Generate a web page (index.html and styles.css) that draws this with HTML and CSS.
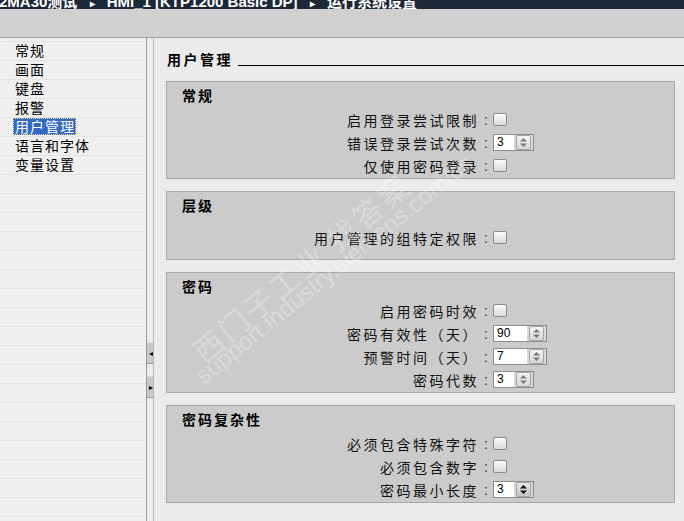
FILE: index.html
```html
<!DOCTYPE html>
<html lang="zh-CN">
<head>
  <meta charset="UTF-8" />
  <title>运行系统设置</title>
  <link rel="stylesheet" href="styles.css">
</head>
<body>

  <!-- 标题栏 -->
  <div class="titlebar">
    <span class="crumbs">2MA30测试 <span class="sep">▸</span> HMI_1 [KTP1200 Basic DP] <span class="sep">▸</span> 运行系统设置</span>
  </div>
  <div class="toolbar"></div>

  <div class="main">
    <!-- 左侧导航 -->
    <ul class="nav">
      <li>常规</li>
      <li>画面</li>
      <li>键盘</li>
      <li>报警</li>
      <li class="selected"><span>用户管理</span></li>
      <li>语言和字体</li>
      <li>变量设置</li>
    </ul>

    <div class="splitter">
      <span class="split-btn">&#9666;</span>
      <span class="split-btn">&#9656;</span>
    </div>

    <!-- 内容 -->
    <div class="content">
      <h2 class="page-title"><span>用户管理</span><i class="rule"></i></h2>

      <section class="group">
        <h3>常规</h3>
        <div class="field"><label>启用登录尝试限制</label><span class="colon">:</span><span class="check"></span></div>
        <div class="field"><label>错误登录尝试次数</label><span class="colon">:</span>
          <span class="spin"><span class="spin-val">3</span><span class="spin-btn"><svg width="9" height="11" viewBox="0 0 9 11"><path d="M4.5 1 L8 4.5 L1 4.5 Z M1 6.5 L8 6.5 L4.5 10 Z" fill="#7a7a7a"/></svg></span></span>
        </div>
        <div class="field"><label>仅使用密码登录</label><span class="colon">:</span><span class="check"></span></div>
      </section>

      <section class="group group-loose">
        <h3>层级</h3>
        <div class="field"><label>用户管理的组特定权限</label><span class="colon">:</span><span class="check"></span></div>
      </section>

      <section class="group">
        <h3>密码</h3>
        <div class="field"><label>启用密码时效</label><span class="colon">:</span><span class="check"></span></div>
        <div class="field"><label>密码有效性（天）</label><span class="colon">:</span>
          <span class="spin spin-wide"><span class="spin-val">90</span><span class="spin-btn"><svg width="9" height="11" viewBox="0 0 9 11"><path d="M4.5 1 L8 4.5 L1 4.5 Z M1 6.5 L8 6.5 L4.5 10 Z" fill="#7a7a7a"/></svg></span></span>
        </div>
        <div class="field"><label>预警时间（天）</label><span class="colon">:</span>
          <span class="spin spin-wide"><span class="spin-val">7</span><span class="spin-btn"><svg width="9" height="11" viewBox="0 0 9 11"><path d="M4.5 1 L8 4.5 L1 4.5 Z M1 6.5 L8 6.5 L4.5 10 Z" fill="#7a7a7a"/></svg></span></span>
        </div>
        <div class="field"><label>密码代数</label><span class="colon">:</span>
          <span class="spin"><span class="spin-val">3</span><span class="spin-btn"><svg width="9" height="11" viewBox="0 0 9 11"><path d="M4.5 1 L8 4.5 L1 4.5 Z M1 6.5 L8 6.5 L4.5 10 Z" fill="#7a7a7a"/></svg></span></span>
        </div>
      </section>

      <section class="group">
        <h3>密码复杂性</h3>
        <div class="field"><label>必须包含特殊字符</label><span class="colon">:</span><span class="check"></span></div>
        <div class="field"><label>必须包含数字</label><span class="colon">:</span><span class="check"></span></div>
        <div class="field"><label>密码最小长度</label><span class="colon">:</span>
          <span class="spin spin-focus"><span class="spin-val">3</span><span class="spin-btn"><svg width="9" height="11" viewBox="0 0 9 11"><path d="M4.5 1 L8 4.5 L1 4.5 Z M1 6.5 L8 6.5 L4.5 10 Z" fill="#111"/></svg></span></span>
        </div>
      </section>

      <!-- 水印 -->
      <div class="watermark wm-cn">西门子工业 找答案</div>
      <div class="watermark wm-url">support.industry.siemens.com/cs</div>
    </div>
  </div>

</body>
</html>
```

FILE: styles.css
```css
* {
  box-sizing: border-box;
  margin: 0;
  padding: 0;
}

html, body {
  width: 684px;
  height: 521px;
  overflow: hidden;
}

body {
  font-family: "Noto Sans CJK SC", "Liberation Sans", sans-serif;
  font-size: 14px;
  color: #000;
  background: #ebebeb;
}

/* --- TITLE BAR --- */
.titlebar {
  height: 9px;
  background: #1d2838;
  overflow: hidden;
  white-space: nowrap;
}

.crumbs {
  display: block;
  margin: -6px 0 0 -1px;
  font-family: "Liberation Sans", "Noto Sans CJK SC", sans-serif;
  font-size: 15px;
  line-height: 16px;
  font-weight: bold;
  color: #fff;
}

.crumbs .sep {
  font-size: 10px;
  margin: 0 8px;
}

.toolbar {
  height: 29px;
  background: #d0d0d0;
  border-bottom: 1px solid #a4a4a4;
}

/* --- LAYOUT --- */
.main {
  display: flex;
  height: 483px;
}

.nav {
  list-style: none;
  width: 146px;
  padding-top: 3px;
  background-color: #f0f0f0;
  background-image: repeating-linear-gradient(to bottom, #e4e4e4 0, #e4e4e4 1px, transparent 1px, transparent 19px);
  background-position: 0 3px;
}

.nav li {
  height: 19px;
  line-height: 19px;
  padding-left: 15px;
  letter-spacing: 1px;
  white-space: nowrap;
}

.nav li.selected span {
  display: inline-block;
  height: 17px;
  line-height: 16px;
  margin-left: -2px;
  padding: 0 1px 0 2px;
  background: #3268c4;
  color: #fff;
  outline: 1px dotted #e8d88a;
  outline-offset: -1px;
}

.splitter {
  width: 8px;
  background: #ececec;
  border-left: 1px solid #9a9a9a;
  border-right: 1px solid #b8b8b8;
  display: flex;
  flex-direction: column;
  padding-top: 304px;
  gap: 12px;
}

.split-btn {
  height: 22px;
  background: #c9c9c9;
  border-top: 1px solid #dedede;
  border-bottom: 1px solid #9c9c9c;
  font-size: 8px;
  line-height: 20px;
  text-align: right;
  color: #000;
  overflow: hidden;
}

/* --- CONTENT --- */
.content {
  position: relative;
  flex: 1;
  background: #ebebeb;
  padding: 12px 9px 0 12px;
  overflow: hidden;
}

.page-title {
  display: flex;
  align-items: flex-end;
  height: 18px;
  margin: 0 -9px 13px 1px;
  font-size: 14px;
  font-weight: bold;
  line-height: 18px;
  letter-spacing: 2.5px;
}

.page-title .rule {
  flex: 1;
  margin: 0 0 2px 5px;
  border-bottom: 1px solid #000;
}

.group {
  background: #cbcbcb;
  border: 1px solid #a8a8a8;
  padding: 4px 0 1px;
  margin-bottom: 12px;
}

.group h3 {
  height: 18px;
  line-height: 18px;
  padding-left: 15px;
  margin-bottom: 4px;
  font-size: 14px;
  font-weight: bold;
  letter-spacing: 2px;
}

.group-loose {
  padding-bottom: 10px;
}

.group-loose h3 {
  margin-bottom: 12px;
}

.field {
  display: grid;
  grid-template-columns: 312px 14px auto;
  align-items: center;
  height: 23px;
}

.field label {
  text-align: right;
  letter-spacing: 2.5px;
  white-space: nowrap;
  color: #111;
}

.colon {
  text-align: center;
  font-family: "Liberation Sans", sans-serif;
  color: #333;
}

.check {
  width: 14px;
  height: 13px;
  border: 1px solid #8a8a8a;
  border-radius: 2px;
  background: linear-gradient(#fdfdfd, #d9d9d9);
}

/* spin box */
.spin {
  display: inline-flex;
  width: 41px;
  height: 17px;
  border: 1px solid #8c8c8c;
  background: #d8d8d8;
}

.spin-wide {
  width: 54px;
}

.spin-val {
  flex: 1;
  background: #fff;
  font-family: "Liberation Sans", sans-serif;
  font-size: 12px;
  line-height: 15px;
  padding-left: 3px;
  margin-right: 2px;
}

.spin-btn {
  width: 15px;
  margin: 0 2px 0 0;
  border: 1px solid #a5a5a5;
  border-radius: 2px;
  background: linear-gradient(#f4f4f4, #d6d6d6);
  display: flex;
  align-items: center;
  justify-content: center;
}

.spin-focus .spin-btn {
  background: linear-gradient(#e8e8e8, #c4c4c4);
}

/* --- WATERMARK --- */
.watermark {
  position: absolute;
  white-space: nowrap;
  color: rgba(255, 255, 255, 0.3);
  transform-origin: left top;
  pointer-events: none;
}

.wm-cn {
  left: 28px;
  top: 300px;
  font-size: 30px;
  letter-spacing: 3px;
  transform: rotate(-40deg);
}

.wm-url {
  left: 36px;
  top: 330px;
  font-family: "Liberation Sans", sans-serif;
  font-size: 24px;
  transform: rotate(-39deg);
}
```
